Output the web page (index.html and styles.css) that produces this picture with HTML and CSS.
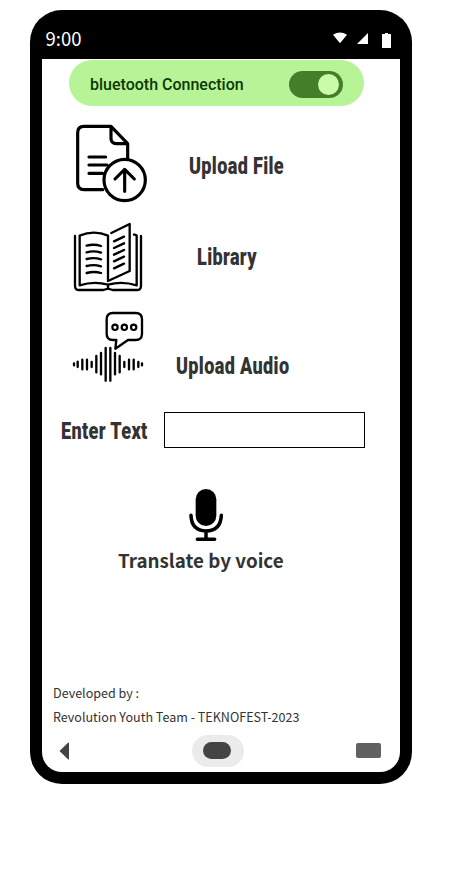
FILE: index.html
```html
<!DOCTYPE html>
<html lang="en">
<head>
<meta charset="utf-8">
<title>Translator</title>
<link rel="stylesheet" href="styles.css">
</head>
<body>
<div class="phone">
  <header class="status">
    <span class="time">9:00</span>
    <svg class="status-icons" viewBox="0 0 60 18" width="60" height="18" fill="#fff">
      <path d="M0 4.800Q7 .2 14 4.800L7 13.200Z"/>
      <path d="M24 14L35 3V14Z"/>
      <path d="M49 4H52V3H55V4H58V18H49Z"/>
    </svg>
  </header>
  <main class="screen">
    <div class="bluetooth">
      <span>bluetooth Connection</span>
      <div class="switch"><div class="knob"></div></div>
    </div>
    <section class="row file">
      <svg viewBox="0 0 300 285" width="100" height="95" fill="none" stroke="#000" stroke-width="9.500" stroke-linecap="round" stroke-linejoin="round">
        <path d="M128 224H72Q53 224 53 205V53Q53 34 72 34H153L203 86V130M153 36V70Q153 86 169 86H202"/>
        <path d="M87 126H137M87 150H141M87 175H128"/>
        <circle cx="194" cy="195" r="62"/>
        <path d="M194 229V163M165 192L194 163L223 192"/>
      </svg>
      <h2 class="label"><span>Upload File</span></h2>
    </section>
    <section class="row library">
      <svg viewBox="0 0 300 255" width="100" height="85" fill="none" stroke="#000" stroke-width="7" stroke-linecap="round" stroke-linejoin="round">
        <path d="M45 63V212Q45 225 58 225H130L144 221L158 225H230Q243 225 243 212V63"/>
        <path d="M144 195V62Q102 44 59 62V211Q102 197 144 209Q187 197 230 211V62Q226 58 222 59M144 209V219"/>
        <path d="M154 54L209 27V168L144 198"/>
        <path d="M80 92Q102 86 123 93M80 112Q102 106 123 113M80 132Q102 126 123 133M80 153Q102 147 123 154M80 174Q102 168 123 174M162 79L192 65M162 99L192 85M162 119L192 105M162 139L192 125M162 160L192 146"/>
      </svg>
      <h2 class="label"><span>Library</span></h2>
    </section>
    <section class="row audio">
      <svg viewBox="0 0 300 255" width="100" height="85" fill="none" stroke="#000" stroke-width="7" stroke-linecap="round" stroke-linejoin="round">
        <path d="M159 24H227Q246 24 246 43V86Q246 105 227 105H204L166 131L169 105H159Q140 105 140 86V43Q140 24 159 24Z"/>
        <g stroke-width="6.500"><circle cx="165" cy="67" r="8"/><circle cx="193" cy="67" r="8"/><circle cx="221" cy="67" r="8"/></g>
        <path d="M42 175V181M53 170V186M67 164V193M81 164V193M95 171V186M109 153V202M123 144V208M137 129V227M151 129V227M165 144V208M179 153V202M193 171V186M207 164V193M221 164V193M235 171V186M246 175V181"/>
      </svg>
      <h2 class="label"><span>Upload Audio</span></h2>
    </section>
    <section class="entry">
      <label class="label" for="text"><span>Enter Text</span></label>
      <input id="text" type="text">
    </section>
    <section class="voice">
      <svg viewBox="255 15 126 180" width="42" height="60" fill="none" stroke="#000" stroke-width="10.500" stroke-linecap="round">
        <rect x="287" y="27" width="62" height="111" rx="31" fill="#000" stroke="none"/>
        <path d="M273 106Q274 152 318 153Q362 152 364 106M318 153V178M292 178H344"/>
      </svg>
      <h3>Translate by voice</h3>
    </section>
    <footer class="credits">
      <p>Developed by :</p>
      <p>Revolution Youth Team - TEKNOFEST-2023</p>
    </footer>
    <nav class="nav">
      <svg viewBox="0 0 10 18" width="10" height="18"><path d="M.5 9L9 .8Q10 0 10 1V17Q10 18 9 17.200Z" fill="#444"/></svg>
      <div class="home"><div class="home-pill"></div></div>
      <div class="recent"></div>
    </nav>
  </main>
</div>
</body>
</html>
```
FILE: styles.css
```css
* { box-sizing: border-box; }
body { margin: 0; background: #fff; color: #333; font-family: "Noto Sans CJK SC", sans-serif; }
h2, h3, p { margin: 0; }
svg { display: block; flex: none; }
.phone { width: 382px; height: 774px; margin: 10px 0 0 30px; padding: 0 12px 12px; border-radius: 32px; background: #000; overflow: hidden; }
.status { height: 49px; display: flex; justify-content: space-between; padding: 0 7px 0 3.500px; }
.time { margin-top: 14px; font: 18.500px/28px "Noto Sans CJK SC", sans-serif; color: #fff; }
.status-icons { margin-top: 20px; }
.screen { height: 713px; display: flex; flex-direction: column; background: #fff; border-radius: 0 0 20px 20px; }
.bluetooth { flex: none; width: 295px; height: 46px; margin: 1px 0 0 27px; padding: 3px 21px 0; display: flex; align-items: center; justify-content: space-between; border-radius: 23px; background: #b7f397; color: #0b3900; font: 500 16px/24px Roboto, sans-serif; }
.bluetooth span { margin-top: 1px; }
.switch { width: 54px; height: 27px; padding: 3px 4px 3px 3px; display: flex; justify-content: flex-end; border-radius: 14px; background: #457e29; }
.knob { width: 21px; height: 21px; border-radius: 50%; background: #c9fba9; }
.row { flex: none; display: flex; align-items: flex-start; padding-left: 18px; }
.label { font: 900 23px/30px Roboto, sans-serif; letter-spacing: .45px; white-space: nowrap; }
.label span { display: inline-block; transform: scaleX(.785); transform-origin: left; }
.file { height: 95px; margin-top: 9px; }
.file .label { margin: 37px 0 0 29px; }
.library { height: 85px; margin-top: 5px; }
.library .label { margin: 28px 0 0 36.500px; }
.audio { height: 85px; margin-top: 5px; }
.audio .label { margin: 47px 0 0 15.500px; }
.entry { flex: none; height: 36px; margin-top: 22px; padding-left: 19px; display: flex; align-items: center; }
.entry .label { width: 103px; padding-top: 3px; }
.entry input { width: 201px; height: 36px; border: 1px solid #000; background: #fff; padding: 4px 8px; }
.voice { flex: none; height: 95px; margin-top: 37px; }
.voice svg { margin-left: 143px; }
.voice h3 { margin-left: 76px; font-size: 18.800px; line-height: 30px; white-space: nowrap; }
.credits { flex: none; margin: 101px 0 0 11px; font-size: 12.550px; line-height: 24px; }
.nav { flex: none; height: 32px; margin-top: 6px; padding: 0 19px 0 17px; display: flex; align-items: center; justify-content: space-between; }
.nav svg, .recent { margin-bottom: 1px; }
.home { width: 52px; height: 32px; margin-left: 11px; display: flex; align-items: center; justify-content: center; border-radius: 16px; background: #ebebeb; }
.home-pill { width: 28px; height: 17px; margin: 0 2px 1px 0; border-radius: 9px; background: #444; }
.recent { width: 25px; height: 15px; border-radius: 2px; background: #616161; }
```
